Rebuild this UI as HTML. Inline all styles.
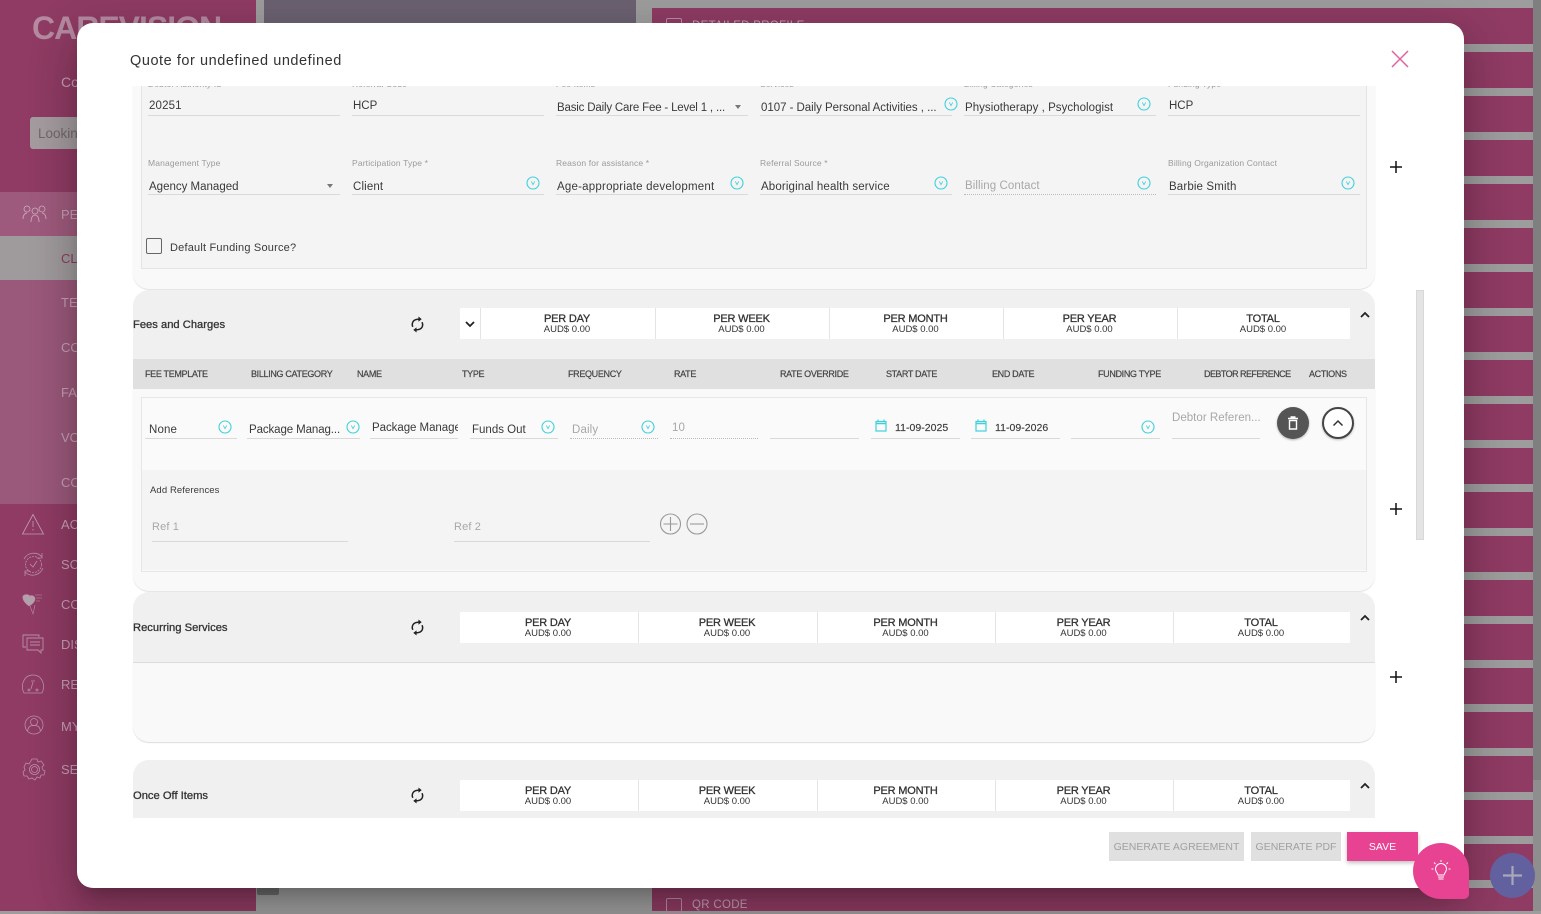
<!DOCTYPE html>
<html><head><meta charset="utf-8"><title>Quote</title>
<style>
html,body{margin:0;padding:0;width:1541px;height:911px;overflow:hidden;background:#9d9d9d;font-family:"Liberation Sans",sans-serif;color:#333}
.a{position:absolute}
.t{position:absolute;white-space:nowrap;line-height:16px;margin-top:2px;font-size:11.5px;letter-spacing:.14px;color:#3a3a3a}
.l{position:absolute;white-space:nowrap;line-height:12px;font-size:8.5px;letter-spacing:.15px;color:#9a9a9a}
.g{color:#a8a8a8}
.u{position:absolute;height:1px;background:#d9d9d9}
.d{position:absolute;height:0;border-top:1px dotted #bbb}
.h{position:absolute;white-space:nowrap;line-height:14px;font-size:9px;letter-spacing:-.33px;color:#444;-webkit-text-stroke:.2px #444}
.s{position:absolute;background:#fff;height:31px;text-align:center;color:#333;border-right:1px solid #e4e4e4;box-sizing:border-box;padding-right:2px}
.s b{display:block;font-weight:400;font-size:11px;letter-spacing:-.2px;line-height:11px;margin-top:6px;-webkit-text-stroke:.3px #333}
.s i{display:block;font-style:normal;font-size:9.5px;line-height:10px;margin-top:0}
.sec{position:absolute;white-space:nowrap;font-size:11.2px;margin-top:1px;line-height:16px;color:#333;-webkit-text-stroke:.3px #333}
.side{position:absolute;left:61px;margin-top:1px;font-size:13px;line-height:16px;color:#c59fb3;white-space:nowrap}
svg{position:absolute;overflow:visible}
.btn{position:absolute;top:832px;height:29px;line-height:31px;text-align:center;white-space:nowrap;font-size:10.5px;letter-spacing:0;background:#e0e0e0;color:#a0a0a0}
</style></head><body>
<svg width="0" height="0" style="position:absolute"><defs>
<symbol id="cv" viewBox="0 0 14 14"><circle cx="7" cy="7" r="6" fill="none" stroke="#3fd0dc" stroke-width="1.100"/><path d="M5.300 5.400 7 8.600 8.700 5.400" fill="none" stroke="#3fd0dc" stroke-width=".8"/></symbol>
<symbol id="rf" viewBox="0 0 16 18"><path d="M3 11.500C1.500 8 3 4 7.500 3.500L10 3.300M12.800 6.500C14.500 10 13 14 8.500 14.500L6 14.700" fill="none" stroke="#222" stroke-width="1.600"/><path d="M9 .5 12.500 3.300 9 6zM7 12 3.500 14.700 7 17.500z" fill="#222"/></symbol>
<symbol id="cal" viewBox="0 0 12 13"><rect x="1" y="2.500" width="10" height="9.500" fill="none" stroke="#3fd0dc" stroke-width="1.200"/><path d="M1 4.500H11" stroke="#3fd0dc" stroke-width="1.500"/><path d="M3 .5V2.500M9 .5V2.500" stroke="#3fd0dc" stroke-width="1.200"/></symbol>
</defs></svg>

<!-- page background -->
<div class="a" style="left:0;top:0;width:256px;height:911px;background:#8f3b63"></div>
<div class="a" style="left:264px;top:0;width:372px;height:911px;background:#6b6171"></div>
<div class="a" style="left:264px;top:880px;width:372px;height:31px;background:#9d9d9d"></div>
<div class="a" style="left:652px;top:0;width:881px;height:911px;background:repeating-linear-gradient(to bottom,#9d9d9d 0,#9d9d9d 8px,#8f3b63 8px,#8f3b63 44px)"></div>
<div class="a" style="left:1533px;top:0;width:8px;height:911px;background:#8e8e8e"></div>
<div class="a" style="left:1533px;top:0;width:8px;height:780px;background:#7f7f7f"></div>
<div class="t" style="left:692px;top:16px;font-size:11.5px;color:#c4a2b3;letter-spacing:.3px">DETAILED PROFILE</div>
<div class="a" style="left:666px;top:18px;width:14px;height:14px;border:1px solid #b98ca3;border-radius:2px"></div>
<div class="a" style="left:666px;top:898px;width:14px;height:14px;border:1px solid #b98ca3;border-radius:2px"></div>
<div class="t" style="left:692px;top:895px;font-size:11.5px;color:#c4a2b3;letter-spacing:.3px">QR CODE</div>

<!-- sidebar -->
<div class="a" style="left:32px;top:10px;font:700 32px/36px 'Liberation Sans',sans-serif;color:#b58aa1;white-space:nowrap;letter-spacing:-1px">CAREVISION</div>
<div class="side" style="top:73px;font-size:14px">Co</div>
<div class="a" style="left:30px;top:117px;width:100px;height:32px;background:#a39b9e;border-radius:3px"></div>
<div class="side" style="left:38px;top:125px;color:#6f686b;font-size:13.5px">Looking</div>
<div class="a" style="left:0;top:192px;width:256px;height:44px;background:#9e5a7c"></div>
<div class="a" style="left:0;top:236px;width:256px;height:44px;background:#9f9a9c"></div>
<div class="a" style="left:0;top:280px;width:256px;height:224px;background:#9a587a"></div>
<div class="side" style="top:206px">PEOPLE</div>
<div class="side" style="top:250px;color:#8f3b63">CLIENTS</div>
<div class="side" style="top:294px">TEAM</div>
<div class="side" style="top:339px">CONTACTS</div>
<div class="side" style="top:384px">FAMILY</div>
<div class="side" style="top:429px">VOLUNTEERS</div>
<div class="side" style="top:474px">COMPANY</div>
<div class="side" style="top:516px">ACTIVITY</div>
<div class="side" style="top:556px">SCHEDULE</div>
<div class="side" style="top:596px">COMMUNITY</div>
<div class="side" style="top:636px">DISCUSSIONS</div>
<div class="side" style="top:676px">REPORTS</div>
<div class="side" style="top:718px">MY ACCOUNT</div>
<div class="side" style="top:761px">SETTINGS</div>
<svg style="left:22px;top:204px" width="26" height="20" fill="none" stroke="#cdaebd" stroke-width=".8"><circle cx="5" cy="5" r="3"/><circle cx="13" cy="7" r="3"/><circle cx="20" cy="5" r="3"/><path d="M1 15c0-4 2-6 4-6M9 18c0-5 2-7 4-7s4 2 4 7M20 9c2 0 4 2 4 6"/></svg>
<svg style="left:22px;top:513px" width="22" height="22" fill="none" stroke="#c29eb1" stroke-width=".8"><path d="M11 1.500 21.500 21H.5z"/><path d="M11 8v6M11 16v1.500"/></svg>
<svg style="left:21px;top:552px" width="25" height="25" fill="none" stroke="#b890a6" stroke-width=".8"><path d="M3 7A11 11 0 0 1 21 5M22 16A11 11 0 0 1 4 20"/><path d="M21 1V6H16M4 24V19H9"/><circle cx="12.500" cy="12.500" r="8" stroke-dasharray="2 1"/><path d="M9 12l3 3 4-6"/></svg>
<svg style="left:22px;top:593px" width="22" height="22" fill="#b3a0aa" stroke="#b890a6" stroke-width=".6"><path d="M1 3c2-2 5-2 7 0 2-1 5 0 5 3 0 3-4 6-6 7C4 11 0 7 1 3z"/><path d="M8 13l3 8 2-9M13 2h7M14 5h6M14 8h4" fill="none"/></svg>
<svg style="left:22px;top:634px" width="22" height="20" fill="none" stroke="#b890a6" stroke-width=".9"><path d="M4 13H1V1h16v2"/><path d="M5 4h16v12h-2v3l-3-3H5z"/><path d="M8 8h10M8 11h10"/></svg>
<svg style="left:21px;top:673px" width="24" height="22" fill="none" stroke="#b890a6" stroke-width=".8"><path d="M3 20C-1 12 3 2 12 2s13 10 9 18z"/><circle cx="8" cy="17" r="1"/><circle cx="16" cy="17" r="1"/><path d="M12 9l-2 7M10 8h4"/></svg>
<svg style="left:24px;top:715px" width="20" height="20" fill="none" stroke="#b890a6" stroke-width=".8"><circle cx="10" cy="10" r="9"/><circle cx="10" cy="7" r="3.500"/><path d="M3.500 16c1-5 3-5.500 6.500-5.500s5.500 .5 6.500 5.500"/></svg>
<svg style="left:23px;top:758px" width="23" height="23" fill="none" stroke="#b890a6" stroke-width=".8"><circle cx="11.500" cy="11.500" r="5"/><circle cx="11.500" cy="11.500" r="3"/><path d="M9 1h5l1 3 3-1 3 4-2 2 1 3 2 1-1 4-3 0-1 3-3-1-2 3-3-2-3 1-2-3-3 0-1-4 2-2-1-3 2-4 3 1z"/></svg>
<div class="a" style="left:257px;top:880px;width:22px;height:15px;background:#6d6d6d;border-radius:2px"></div>

<!-- modal -->
<div class="a" style="left:77px;top:23px;width:1387px;height:865px;background:#fff;border-radius:16px;box-shadow:0 11px 15px -7px rgba(0,0,0,.2),0 24px 38px 3px rgba(0,0,0,.14),0 9px 46px 8px rgba(0,0,0,.12)"></div>
<div class="t" style="left:130px;top:50px;font-size:14.5px;letter-spacing:.55px;line-height:18px;color:#333">Quote for undefined undefined</div>
<svg style="left:1391px;top:50px" width="18" height="18" fill="none" stroke="#e4609c" stroke-width="1.500"><path d="M1 1 17 17M17 1 1 17"/></svg>

<!-- scrolling content -->
<div class="a" style="left:0;top:0;width:1541px;height:911px;clip-path:inset(86px 0 93px 0)">
<!-- top card -->
<div class="a" style="left:133px;top:40px;width:1242px;height:249px;background:#f9f9f9;border-radius:0 0 16px 16px;box-shadow:0 1px 1px rgba(0,0,0,.12)"></div>
<div class="a" style="left:141px;top:40px;width:1224px;height:227px;background:#f4f4f4;border:1px solid #e4e4e4"></div>

<div class="l" style="left:148px;top:78px">Debtor Authority Id</div>
<div class="l" style="left:352px;top:78px">Referral Code</div>
<div class="l" style="left:556px;top:78px">Fee Items</div>
<div class="l" style="left:760px;top:78px">Services</div>
<div class="l" style="left:964px;top:78px">Billing Categories</div>
<div class="l" style="left:1168px;top:78px">Funding Type</div>
<div class="t" style="left:149px;top:96px">20251</div><div class="u" style="left:148px;top:115px;width:192px"></div>
<div class="t" style="left:353px;top:96px;letter-spacing:0">HCP</div><div class="u" style="left:352px;top:115px;width:192px"></div>
<div class="t" style="left:557px;top:98px;letter-spacing:-.18px">Basic Daily Care Fee - Level 1 , ...</div><div class="u" style="left:556px;top:115px;width:192px"></div>
<div class="a" style="left:735px;top:105px;border:3.500px solid transparent;border-top:4px solid #777;border-bottom:0"></div>
<div class="t" style="left:761px;top:98px;letter-spacing:-.04px">0107 - Daily Personal Activities , ...</div><div class="u" style="left:760px;top:115px;width:192px"></div>
<svg style="left:944px;top:97px" width="14" height="14"><use href="#cv"/></svg>
<div class="t" style="left:965px;top:98px;letter-spacing:.04px">Physiotherapy , Psychologist</div><div class="u" style="left:964px;top:115px;width:192px"></div>
<svg style="left:1137px;top:97px" width="14" height="14"><use href="#cv"/></svg>
<div class="t" style="left:1169px;top:96px;letter-spacing:0">HCP</div><div class="u" style="left:1168px;top:115px;width:192px"></div>

<div class="l" style="left:148px;top:157px">Management Type</div>
<div class="l" style="left:352px;top:157px">Participation Type *</div>
<div class="l" style="left:556px;top:157px">Reason for assistance *</div>
<div class="l" style="left:760px;top:157px">Referral Source *</div>
<div class="l" style="left:1168px;top:157px">Billing Organization Contact</div>
<div class="t" style="left:149px;top:177px;letter-spacing:0">Agency Managed</div><div class="u" style="left:148px;top:194px;width:192px"></div>
<div class="a" style="left:327px;top:184px;border:3.500px solid transparent;border-top:4px solid #777;border-bottom:0"></div>
<div class="t" style="left:353px;top:177px">Client</div><div class="u" style="left:352px;top:194px;width:192px"></div>
<svg style="left:526px;top:176px" width="14" height="14"><use href="#cv"/></svg>
<div class="t" style="left:557px;top:177px;letter-spacing:.22px">Age-appropriate development</div><div class="u" style="left:556px;top:194px;width:192px"></div>
<svg style="left:730px;top:176px" width="14" height="14"><use href="#cv"/></svg>
<div class="t" style="left:761px;top:177px">Aboriginal health service</div><div class="u" style="left:760px;top:194px;width:192px"></div>
<svg style="left:934px;top:176px" width="14" height="14"><use href="#cv"/></svg>
<div class="t g" style="left:965px;top:176px;letter-spacing:.08px">Billing Contact</div><div class="d" style="left:964px;top:194px;width:192px"></div>
<svg style="left:1137px;top:176px" width="14" height="14"><use href="#cv"/></svg>
<div class="t" style="left:1169px;top:177px">Barbie Smith</div><div class="u" style="left:1168px;top:194px;width:192px"></div>
<svg style="left:1341px;top:176px" width="14" height="14"><use href="#cv"/></svg>

<div class="a" style="left:146px;top:238px;width:14px;height:14px;border:1px solid #666;border-radius:2px"></div>
<div class="t" style="left:170px;top:238px;font-size:11px;letter-spacing:.2px">Default Funding Source?</div>

<!-- Fees and Charges -->
<div class="a" style="left:133px;top:290px;width:1242px;height:70px;background:#f0f0f0;border-radius:16px 16px 0 0"></div>
<div class="a" style="left:133px;top:359px;width:1242px;height:30px;background:#e0e0e0"></div>
<div class="a" style="left:133px;top:389px;width:1242px;height:202px;background:#f9f9f9;border-radius:0 0 16px 16px;box-shadow:0 1px 1px rgba(0,0,0,.12)"></div>
<div class="a" style="left:141px;top:397px;width:1224px;height:173px;background:#fafafa;border:1px solid #e6e6e6"></div>
<div class="a" style="left:142px;top:470px;width:1224px;height:100px;background:#f4f4f4"></div>
<div class="sec" style="left:133px;top:316px">Fees and Charges</div>
<svg style="left:410px;top:316px" width="15" height="17"><use href="#rf"/></svg>
<div class="a" style="left:460px;top:308px;width:21px;height:31px;background:#fff;border-right:1px solid #e4e4e4;box-sizing:border-box"></div>
<svg style="left:465px;top:321px" width="10" height="7" fill="none" stroke="#222" stroke-width="1.800"><path d="M1 1 5 5 9 1"/></svg>
<div class="s" style="left:481px;top:308px;width:175px"><b>PER DAY</b><i>AUD$ 0.00</i></div>
<div class="s" style="left:656px;top:308px;width:174px"><b>PER WEEK</b><i>AUD$ 0.00</i></div>
<div class="s" style="left:830px;top:308px;width:174px"><b>PER MONTH</b><i>AUD$ 0.00</i></div>
<div class="s" style="left:1004px;top:308px;width:174px"><b>PER YEAR</b><i>AUD$ 0.00</i></div>
<div class="s" style="left:1178px;top:308px;width:172px;border:0"><b>TOTAL</b><i>AUD$ 0.00</i></div>
<svg style="left:1360px;top:311px" width="10" height="7" fill="none" stroke="#222" stroke-width="1.800"><path d="M1 6 5 2 9 6"/></svg>

<div class="h" style="left:145px;top:367px">FEE TEMPLATE</div>
<div class="h" style="left:251px;top:367px">BILLING CATEGORY</div>
<div class="h" style="left:357px;top:367px">NAME</div>
<div class="h" style="left:462px;top:367px">TYPE</div>
<div class="h" style="left:568px;top:367px">FREQUENCY</div>
<div class="h" style="left:674px;top:367px">RATE</div>
<div class="h" style="left:780px;top:367px">RATE OVERRIDE</div>
<div class="h" style="left:886px;top:367px">START DATE</div>
<div class="h" style="left:992px;top:367px">END DATE</div>
<div class="h" style="left:1098px;top:367px">FUNDING TYPE</div>
<div class="h" style="left:1204px;top:367px;letter-spacing:-.55px">DEBTOR REFERENCE</div>
<div class="h" style="left:1309px;top:367px">ACTIONS</div>

<div class="t" style="left:149px;top:420px">None</div><div class="u" style="left:145px;top:438px;width:92px"></div>
<svg style="left:218px;top:420px" width="14" height="14"><use href="#cv"/></svg>
<div class="t" style="left:249px;top:420px;letter-spacing:-.1px">Package Manag...</div><div class="u" style="left:247px;top:438px;width:113px"></div>
<svg style="left:346px;top:420px" width="14" height="14"><use href="#cv"/></svg>
<div class="t" style="left:372px;top:418px;width:86px;overflow:hidden;letter-spacing:-.05px">Package Manager</div><div class="u" style="left:370px;top:438px;width:88px"></div>
<div class="t" style="left:472px;top:420px;letter-spacing:0">Funds Out</div><div class="u" style="left:470px;top:438px;width:88px"></div>
<svg style="left:541px;top:420px" width="14" height="14"><use href="#cv"/></svg>
<div class="t g" style="left:572px;top:420px">Daily</div><div class="d" style="left:570px;top:438px;width:88px"></div>
<svg style="left:641px;top:420px" width="14" height="14"><use href="#cv"/></svg>
<div class="t g" style="left:672px;top:418px">10</div><div class="d" style="left:670px;top:438px;width:88px"></div>
<div class="u" style="left:770px;top:438px;width:89px"></div>
<svg style="left:875px;top:419px" width="12" height="13"><use href="#cal"/></svg>
<div class="t" style="left:895px;top:418px;font-size:10.5px;letter-spacing:.03px;-webkit-text-stroke:.15px #3a3a3a">11-09-2025</div><div class="u" style="left:871px;top:438px;width:89px"></div>
<svg style="left:975px;top:419px" width="12" height="13"><use href="#cal"/></svg>
<div class="t" style="left:995px;top:418px;font-size:10.5px;letter-spacing:.03px;-webkit-text-stroke:.15px #3a3a3a">11-09-2026</div><div class="u" style="left:971px;top:438px;width:89px"></div>
<div class="u" style="left:1071px;top:438px;width:89px"></div>
<svg style="left:1141px;top:420px" width="14" height="14"><use href="#cv"/></svg>
<div class="t g" style="left:1172px;top:408px;letter-spacing:.03px">Debtor Referen...</div><div class="u" style="left:1172px;top:438px;width:88px"></div>
<div class="a" style="left:1277px;top:407px;width:32px;height:32px;border-radius:50%;background:#555;box-shadow:0 1px 2px rgba(0,0,0,.3)"></div>
<svg style="left:1287px;top:416px" width="12" height="14" fill="none" stroke="#fff" stroke-width="1.400"><path d="M1 2.500H11M3.500 1H8.500"/><path d="M2.500 4.500V13H9.500V4.500z"/></svg>
<div class="a" style="left:1322px;top:407px;width:28px;height:28px;border:2px solid #444;border-radius:50%;background:#fff;box-shadow:0 1px 2px rgba(0,0,0,.25)"></div>
<svg style="left:1332px;top:419px" width="12" height="8" fill="none" stroke="#333" stroke-width="1.500"><path d="M1.500 6.500 6 2 10.500 6.500"/></svg>

<div class="t" style="left:150px;top:481px;font-size:9.5px;letter-spacing:.1px">Add References</div>
<div class="t g" style="left:152px;top:517px;font-size:11px">Ref 1</div><div class="u" style="left:152px;top:541px;width:196px"></div>
<div class="t g" style="left:454px;top:517px;font-size:11px">Ref 2</div><div class="u" style="left:454px;top:541px;width:196px"></div>
<svg style="left:660px;top:513px" width="50" height="22" fill="none" stroke="#999" stroke-width="1.100"><circle cx="10.500" cy="11" r="10"/><path d="M10.500 4V18M3.500 11H17.500"/><circle cx="37" cy="11" r="10"/><path d="M30 11H44"/></svg>

<!-- Recurring -->
<div class="a" style="left:133px;top:592px;width:1242px;height:71px;background:#f0f0f0;border-radius:16px 16px 0 0"></div>
<div class="a" style="left:133px;top:662px;width:1242px;height:1px;background:#dcdcdc"></div>
<div class="a" style="left:133px;top:663px;width:1242px;height:79px;background:#f9f9f9;border-radius:0 0 16px 16px;box-shadow:0 1px 1px rgba(0,0,0,.14)"></div>
<div class="sec" style="left:133px;top:619px">Recurring Services</div>
<svg style="left:410px;top:619px" width="15" height="17"><use href="#rf"/></svg>
<div class="s" style="left:460px;top:612px;width:179px"><b>PER DAY</b><i>AUD$ 0.00</i></div>
<div class="s" style="left:639px;top:612px;width:179px"><b>PER WEEK</b><i>AUD$ 0.00</i></div>
<div class="s" style="left:818px;top:612px;width:178px"><b>PER MONTH</b><i>AUD$ 0.00</i></div>
<div class="s" style="left:996px;top:612px;width:178px"><b>PER YEAR</b><i>AUD$ 0.00</i></div>
<div class="s" style="left:1174px;top:612px;width:176px;border:0"><b>TOTAL</b><i>AUD$ 0.00</i></div>
<svg style="left:1360px;top:614px" width="10" height="7" fill="none" stroke="#222" stroke-width="1.800"><path d="M1 6 5 2 9 6"/></svg>

<!-- Once off -->
<div class="a" style="left:133px;top:760px;width:1242px;height:70px;background:#f0f0f0;border-radius:16px 16px 0 0"></div>
<div class="sec" style="left:133px;top:787px">Once Off Items</div>
<svg style="left:410px;top:787px" width="15" height="17"><use href="#rf"/></svg>
<div class="s" style="left:460px;top:780px;width:179px"><b>PER DAY</b><i>AUD$ 0.00</i></div>
<div class="s" style="left:639px;top:780px;width:179px"><b>PER WEEK</b><i>AUD$ 0.00</i></div>
<div class="s" style="left:818px;top:780px;width:178px"><b>PER MONTH</b><i>AUD$ 0.00</i></div>
<div class="s" style="left:996px;top:780px;width:178px"><b>PER YEAR</b><i>AUD$ 0.00</i></div>
<div class="s" style="left:1174px;top:780px;width:176px;border:0"><b>TOTAL</b><i>AUD$ 0.00</i></div>
<svg style="left:1360px;top:782px" width="10" height="7" fill="none" stroke="#222" stroke-width="1.800"><path d="M1 6 5 2 9 6"/></svg>
</div>

<!-- plus icons -->
<svg style="left:1390px;top:161px" width="12" height="12" stroke="#111" stroke-width="1.500"><path d="M0 6H12M6 0V12"/></svg>
<svg style="left:1390px;top:503px" width="12" height="12" stroke="#111" stroke-width="1.500"><path d="M0 6H12M6 0V12"/></svg>
<svg style="left:1390px;top:671px" width="12" height="12" stroke="#111" stroke-width="1.500"><path d="M0 6H12M6 0V12"/></svg>

<!-- scrollbar -->
<div class="a" style="left:1416px;top:290px;width:8px;height:250px;background:#e4e4e4;border:1px solid #d8d8d8;box-sizing:border-box"></div>

<!-- footer -->
<div class="btn" style="left:1109px;width:135px">GENERATE AGREEMENT</div>
<div class="btn" style="left:1251px;width:90px">GENERATE PDF</div>
<div class="btn" style="left:1347px;width:71px;background:#e84393;color:#fff;box-shadow:0 2px 4px rgba(0,0,0,.25)">SAVE</div>

<div class="a" style="left:1490px;top:853px;width:45px;height:45px;border-radius:50%;background:#62609f"></div>
<svg style="left:1503px;top:866px" width="19" height="19" stroke="#a9a8b8" stroke-width="2.200"><path d="M0 9.500H19M9.500 0V19"/></svg>
<div class="a" style="left:1413px;top:843px;width:56px;height:56px;background:#e84393;border-radius:50% 50% 5px 50%"></div>
<svg style="left:1431px;top:860px" width="20" height="22" fill="none" stroke="#fff" stroke-width="1"><path d="M7 15C6 12 4.500 11.500 4.500 9A5.500 5.500 0 0 1 15.500 9C15.500 11.500 14 12 13 15z"/><path d="M7 17H13M7.500 19H12.500M10 0V2M3 2.500 4.500 4M17 2.500 15.500 4M0.500 9H2.500M17.500 9H19.500"/></svg>
</body></html>
